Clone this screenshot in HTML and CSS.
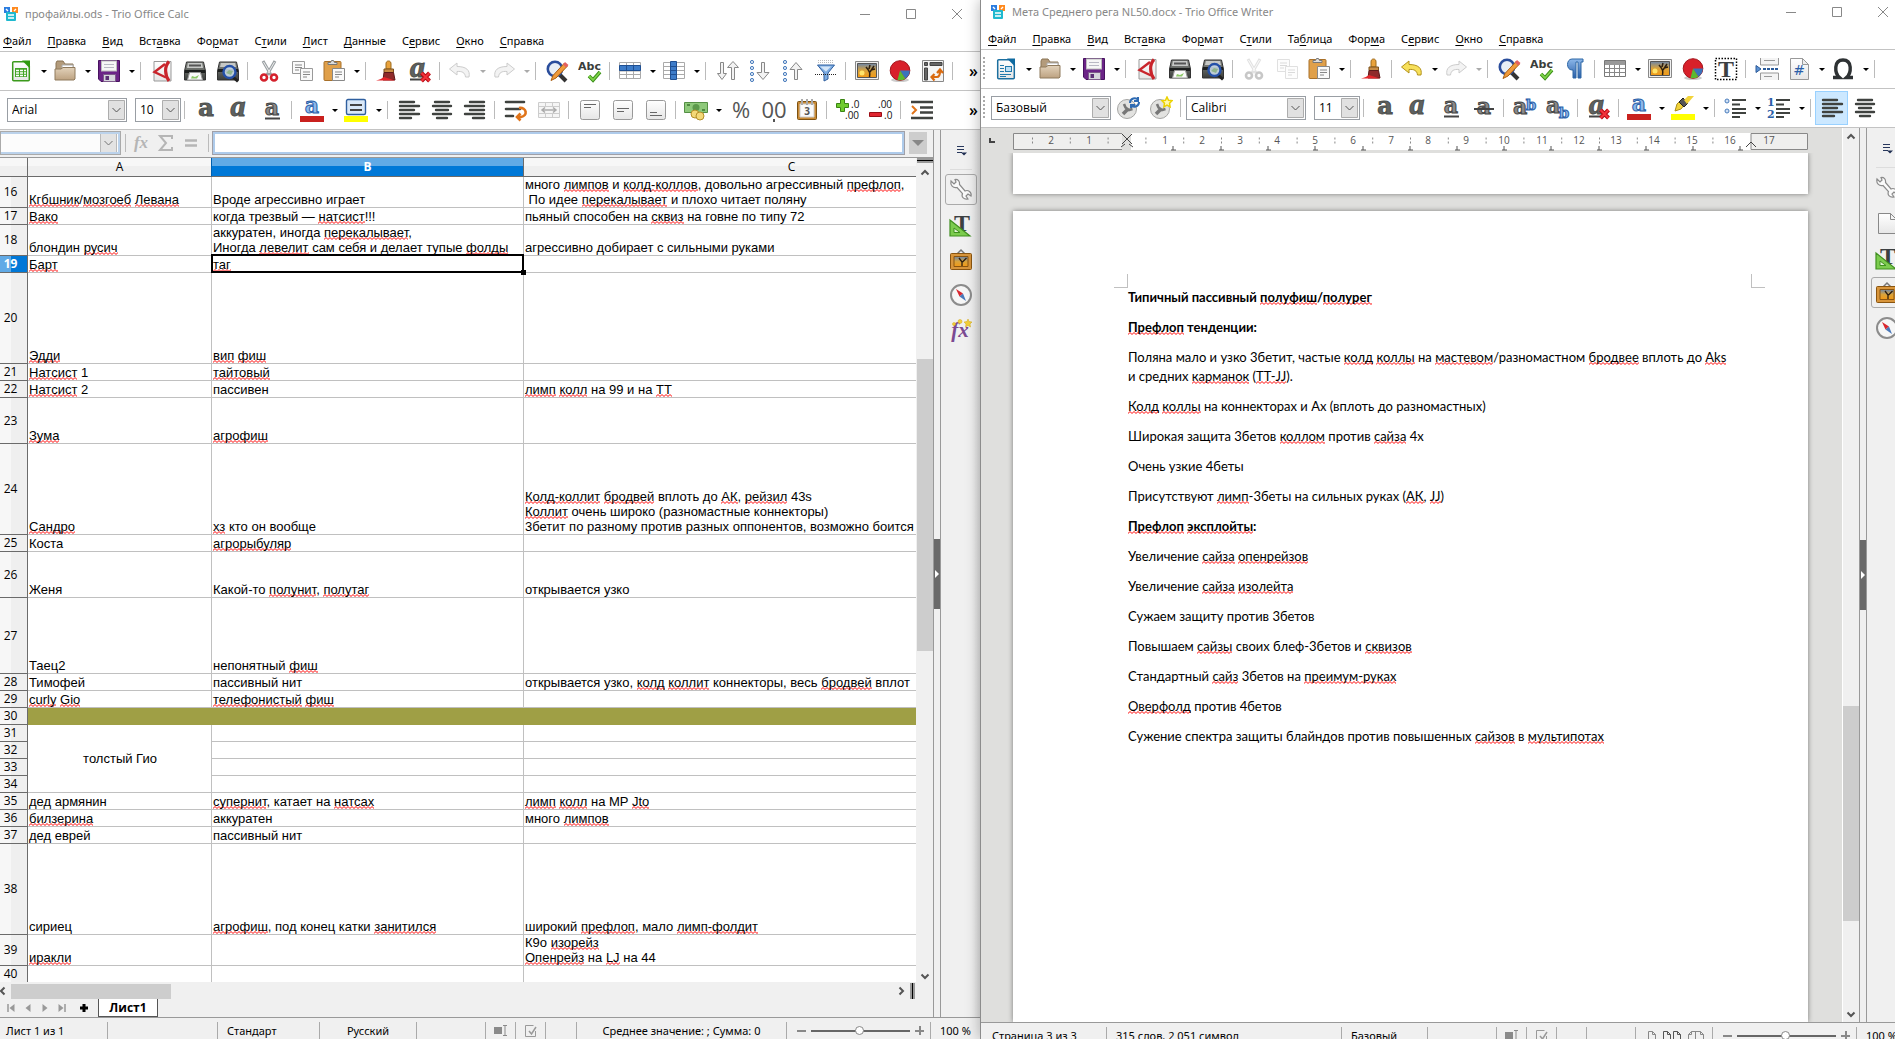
FILE: index.html
```html
<!DOCTYPE html>
<html lang="ru">
<head>
<meta charset="utf-8">
<title>Trio Office</title>
<link rel="stylesheet" href="styles.css">
</head>
<body>
<svg class="paints" aria-hidden="true">
  <defs>
    <linearGradient id="g-dark" x2="0" y2="1"><stop offset="0" stop-color="#8a8d88"/><stop offset="1" stop-color="#3a3d3b"/></linearGradient>
    <linearGradient id="g-blue" x2="0" y2="1"><stop offset="0" stop-color="#8db8ea"/><stop offset="1" stop-color="#2a5ea8"/></linearGradient>
    <linearGradient id="g-sun" x2="0" y2="1"><stop offset="0" stop-color="#6d86a8"/><stop offset=".5" stop-color="#d9a33c"/><stop offset="1" stop-color="#f39a15"/></linearGradient>
    <linearGradient id="g-tan" x2="0" y2="1"><stop offset="0" stop-color="#e2d2ba"/><stop offset="1" stop-color="#bda281"/></linearGradient>
    <linearGradient id="g-paper" x2="0" y2="1"><stop offset="0" stop-color="#fff"/><stop offset="1" stop-color="#e6e6e6"/></linearGradient>
  </defs>
</svg>
<svg class="symbols" aria-hidden="true">
  <symbol id="i-logo" viewBox="0 0 16 16"><path d="M1 1h6v6H1z" fill="#2b7de0"/><path d="M9 1h6v6H9z" fill="#ff8a1f"/><path d="M3 3l2 2M11 5l2-2" stroke="#fff" stroke-width="1.4"/><rect x="3" y="6" width="10" height="9" rx="1" fill="#1fb9cf"/><path d="M5 9h6M5 12h6" stroke="#fff" stroke-width="1.4"/></symbol>
  <symbol id="i-min" viewBox="0 0 12 12"><path d="M1 6.500h10" stroke="#888" fill="none"/></symbol>
  <symbol id="i-max" viewBox="0 0 12 12"><path d="M1.500 1.500h9v9h-9z" stroke="#888" fill="none"/></symbol>
  <symbol id="i-close" viewBox="0 0 12 12"><path d="M1 1l10 10M11 1L1 11" stroke="#888" fill="none"/></symbol>
  <symbol id="i-calc" viewBox="0 0 24 24"><path d="M4 2h12l4 5v14H4z" fill="url(#g-paper)"/><path d="M16 2.700H4.700a1 1 0 0 0-1 1v17a1 1 0 0 0 1 1h14.600a1 1 0 0 0 1-1V7" fill="none" stroke="#3b9a1c" stroke-width="1.500"/><path d="M13 1.500h8v8z" fill="#2f9a10"/><rect x="6" y="9" width="12" height="9" fill="#44a527"/><path d="M7 11.500h3M11 11.500h3M15 11.500h2M7 14h3M11 14h3M15 14h2M7 16.500h3M11 16.500h3M15 16.500h2" stroke="#fff" stroke-width="1.300"/></symbol>
  <symbol id="i-writer" viewBox="0 0 24 24"><path d="M4 2h12l4 5v14H4z" fill="url(#g-paper)"/><path d="M16 2.700H4.700a1 1 0 0 0-1 1v17a1 1 0 0 0 1 1h14.600a1 1 0 0 0 1-1V7" fill="none" stroke="#1c6f9f" stroke-width="1.500"/><path d="M13 1.500h8v8z" fill="#0f6aa0"/><path d="M6 8.500h4M6 11.500h4M6 14.500h4M6 17.500h11M6 19.500h6" stroke="#2179ab" stroke-width="1.200"/><rect x="11.500" y="9.500" width="6" height="5" fill="#bfe0f5" stroke="#2179ab"/></symbol>
  <symbol id="i-open" viewBox="0 0 24 24"><path d="M3 20V4l1-2h6l2 3h8v15z" fill="#b39b7b" stroke="#8a7455"/><path d="M9 6h11v8H9z" fill="#fff" stroke="#aaa"/><path d="M2 21V10h6l2-1.500h12V20l-1 1z" fill="url(#g-tan)" stroke="#8f7a5c"/></symbol>
  <symbol id="i-save" viewBox="0 0 24 24"><path d="M1.500 1.500h21v21H4l-2.500-2.500z" fill="#6b2487" stroke="#47125f"/><rect x="4.500" y="2" width="15" height="10" fill="#f6f6f6" stroke="#bbb"/><path d="M7 5.500h10M7 8.500h10" stroke="#b9b9c4"/><path d="M6.500 15.500h12v7h-12z" fill="#d6d6dc" stroke="#7d5a8b"/><path d="M8.500 17h3.500v4H8.500z" fill="#5b3075"/></symbol>
  <symbol id="i-pdf" viewBox="0 0 24 24"><path d="M4 2.500h17v19.500H4z" fill="url(#g-paper)" stroke="#999"/><path d="M19 2.500c-5 5-4 14 0 19.500" fill="none" stroke="#c9252c" stroke-width="3.200"/><path d="M15 5L4.500 13 16 18.500" fill="none" stroke="#c9252c" stroke-width="2.400"/></symbol>
  <symbol id="i-print" viewBox="0 0 24 24"><path d="M3.500 3h17l2 9v9h-21v-9z" fill="url(#g-dark)" stroke="#333"/><path d="M5 4h14l1 5H4z" fill="#c6c8c6"/><path d="M6 6.500h12" stroke="#555" stroke-width="2"/><path d="M2 11h20v3H2z" fill="#1d1f1e"/><path d="M6.500 13.500h11l2 7.500h-15z" fill="#fbfbfb" stroke="#999"/><path d="M9 17l3 1 4-2-2 3.500H8z" fill="#8cc868"/></symbol>
  <symbol id="i-preview" viewBox="0 0 24 24"><path d="M3.500 3h17l2 9v9h-21v-9z" fill="url(#g-dark)" stroke="#333"/><path d="M5 4h14l1 4H4z" fill="#c6c8c6"/><path d="M2 10h20v3H2z" fill="#1d1f1e"/><path d="M17 18l5 4.500" stroke="#222" stroke-width="3"/><circle cx="13.500" cy="13" r="6" fill="#cfe0ee" fill-opacity=".85" stroke="#2450a8" stroke-width="2.400"/><path d="M10 14l3-3 4 1-2 4z" fill="#8fb58c"/></symbol>
  <symbol id="i-cut" viewBox="0 0 24 24"><path d="M6 2l8 14M18 2l-8 14" stroke="#9aa0a3" stroke-width="3"/><path d="M6.500 3l6.500 11M17.500 3L11 14" stroke="#eee" stroke-width="1"/><circle cx="7" cy="18.500" r="3" fill="none" stroke="#d4212c" stroke-width="2.600"/><circle cx="17" cy="18.500" r="3" fill="none" stroke="#d4212c" stroke-width="2.600"/></symbol>
  <symbol id="i-copy" viewBox="0 0 24 24"><g fill="#fafafa" stroke="#9a9a9a"><path d="M2.500 2.500h12v12h-12z"/><path d="M10.500 9.500h12v12h-12z"/></g><path d="M5 6h7M5 8.500h7M5 11h4M13 13h7M13 15.500h7M13 18h4" stroke="#888"/></symbol>
  <symbol id="i-paste" viewBox="0 0 24 24"><rect x="2" y="2.500" width="17" height="19" rx="1" fill="#e0a04a" stroke="#a8702a"/><path d="M6 5.500V3.500h2.500l1-2h2l1 2H15v2z" fill="#ddd" stroke="#777"/><path d="M10.500 9.500h12v12h-12z" fill="#fafafa" stroke="#888"/><path d="M13 13h7M13 15.500h7M13 18h4" stroke="#888"/></symbol>
  <symbol id="i-brush" viewBox="0 0 24 24"><path d="M13.500 2c2 0 2.500 1.500 2.500 3v5h-5V5c0-1.500.5-3 2.500-3z" fill="#e9a23b" stroke="#9c6a1c"/><path d="M9 10h9.500v3.500H9z" fill="#c98d45" stroke="#7d521d"/><path d="M9 13.500h9.500l1.500 7.500H8z" fill="#8f2a2a" stroke="#5d1a1a"/><path d="M1 21.500c4-1 6-2 8-3.500l11 3.500z" fill="#e5262b"/></symbol>
  <symbol id="i-clear" viewBox="0 0 24 24"><text x="2" y="18" class="ic-ital">a</text><path d="M2 20.500h11" stroke="#444" stroke-width="2"/><path d="M13.500 14l8 8M21.500 14l-8 8" stroke="#b3060f" stroke-width="4"/><path d="M13.500 14l8 8M21.500 14l-8 8" stroke="#f2323b" stroke-width="2.200"/></symbol>
  <symbol id="i-undo" viewBox="0 0 24 24"><path d="M9 4L1.500 10 9 16v-3.500c5-.5 8 1 8.500 5.500h3.500c1.500-7-3-10.500-12-10.500z" fill="#f7e05a" stroke="#b3921b"/></symbol>
  <symbol id="i-undo-off" viewBox="0 0 24 24"><path d="M9 4L1.500 10 9 16v-3.500c5-.5 8 1 8.500 5.500h3.500c1.500-7-3-10.500-12-10.500z" fill="#f3f3f3" stroke="#ccc"/></symbol>
  <symbol id="i-redo-off" viewBox="0 0 24 24"><path d="M15 4l7.500 6-7.500 6v-3.500c-5-.5-8 1-8.500 5.500H3c-1.500-7 3-10.500 12-10.500z" fill="#f3f3f3" stroke="#ccc"/></symbol>
  <symbol id="i-find" viewBox="0 0 24 24"><path d="M15 16l6 6" stroke="#333" stroke-width="4"/><circle cx="10" cy="10" r="7.200" fill="#e8eef6" stroke="#2a4d9c" stroke-width="2.600"/><path d="M6 21.500l2-5L19.500 4l3 3L11 19z" fill="#f09a3a" stroke="#a85e12"/><path d="M18 5.500l2-2.500 3.500 3-2.500 2.500z" fill="#e46060"/></symbol>
  <symbol id="i-spell" viewBox="0 0 24 24"><text x="0" y="10.500" class="ic-abc">Abc</text><path d="M11 17l4 4 7-8" fill="none" stroke="#3a8f17" stroke-width="3.600"/><path d="M11 17l4 4 7-8" fill="none" stroke="#7fd34a" stroke-width="1.800"/></symbol>
  <symbol id="i-row" viewBox="0 0 24 24"><path d="M1.500 3.500h21v16h-21zM1.500 15.500h21M1.500 12h21M8.500 3v17M15.500 3v17" fill="#fff" stroke="#aaa"/><path d="M1.500 6.500h21v5h-21z" fill="#3d7cc9" stroke="#1f4f92"/><path d="M8.500 7v4M15.500 7v4" stroke="#1f4f92"/></symbol>
  <symbol id="i-col" viewBox="0 0 24 24"><path d="M1.500 3.500h21v16h-21zM1.500 7.500h21M1.500 11.500h21M1.500 15.500h21" fill="#fff" stroke="#aaa"/><path d="M8.500 2.500h6v18h-6z" fill="#3d7cc9" stroke="#1f4f92"/><path d="M9 7.500h5M9 11.500h5M9 15.500h5" stroke="#1f4f92"/></symbol>
  <symbol id="i-sort" viewBox="0 0 24 24"><path d="M5.500 3.500h3v11h3l-4.500 6-4.500-6h3z" fill="#f2f2f2" stroke="#888"/><path d="M16.500 20.500h3v-12h4L18 2.500l-5.500 6h4z" fill="#f2f2f2" stroke="#888"/></symbol>
  <symbol id="i-asc" viewBox="0 0 24 24"><g fill="#dfeaf7" stroke="#4a7dbd"><circle cx="4" cy="3" r="1.600"/><circle cx="4" cy="9" r="1.600"/><circle cx="4" cy="15" r="1.600"/><circle cx="4" cy="21" r="1.600"/></g><path d="M13.500 3.500h3v10h4.500l-6 7-6-7h4.500z" fill="#f2f2f2" stroke="#888"/></symbol>
  <symbol id="i-desc" viewBox="0 0 24 24"><g fill="#dfeaf7" stroke="#4a7dbd"><circle cx="4" cy="3" r="1.600"/><circle cx="4" cy="9" r="1.600"/><circle cx="4" cy="15" r="1.600"/><circle cx="4" cy="21" r="1.600"/></g><path d="M13.500 20.500h3v-10h4.500l-6-7-6 7h4.500z" fill="#f2f2f2" stroke="#888"/></symbol>
  <symbol id="i-filter" viewBox="0 0 24 24"><path d="M4 1.500h16M4 3.500h16" stroke="#bbb" stroke-dasharray="1 1"/><path d="M3.500 6h17l-6.500 8v6l-4 2v-8z" fill="#7faee3" stroke="#2f5f9f"/><path d="M6 7.500h11l-5 5z" fill="#d5e6f8"/><path d="M1 15.500h22" stroke="#222" stroke-dasharray="1 1"/></symbol>
  <symbol id="i-image" viewBox="0 0 24 24"><path d="M.5 2.500h23v18H.5z" fill="#f0f0f0" stroke="#888"/><path d="M2.500 4.500h19v14h-19z" fill="url(#g-sun)" stroke="#555"/><circle cx="7" cy="14" r="2.500" fill="#ffe46a"/><path d="M14.500 18c1-4 0-6-3.500-10M15 13l4-6M14 10l1-4M16 11l4-1" fill="none" stroke="#2d1f10" stroke-width="1.500"/></symbol>
  <symbol id="i-chart" viewBox="0 0 24 24"><ellipse cx="12" cy="21" rx="9" ry="2" fill="#ccc"/><circle cx="12" cy="11.500" r="9.800" fill="#d8202a" stroke="#a31219"/><path d="M12 11.500h9.800a9.800 9.800 0 0 1-4.500 8.200z" fill="#3a73bb"/><path d="M12 11.500l5.300 8.200a9.800 9.800 0 0 1-7.800 1.300z" fill="#5cb92f"/></symbol>
  <symbol id="i-pivot" viewBox="0 0 24 24"><path d="M1.500 1.500h21v21h-21z" fill="#f5f5f5" stroke="#888"/><path d="M3.500 3.500h3v3h-3zM9 3.500h12v3H9zM3.500 9h3v12h-3z" fill="#666" stroke="#444"/><path d="M11 18h5c2.500 0 3-2 3-6M13.500 15l-3 3 3 3.500M16 14l3-3.500 3 3.500" fill="none" stroke="#d96a10" stroke-width="2.200"/></symbol>
  <symbol id="i-bold" viewBox="0 0 24 24"><text x="12" y="18" class="ic-bold">a</text></symbol>
  <symbol id="i-italic" viewBox="0 0 24 24"><text x="11" y="18" class="ic-ital mid">a</text></symbol>
  <symbol id="i-under" viewBox="0 0 24 24"><text x="12" y="17" class="ic-thin">a</text><path d="M5 20.500h15" stroke="#444" stroke-width="2"/></symbol>
  <symbol id="i-strike" viewBox="0 0 24 24"><text x="12" y="18" class="ic-thin">a</text><path d="M2 13h20" stroke="#444" stroke-width="2"/></symbol>
  <symbol id="i-sup" viewBox="0 0 24 24"><text x="7" y="18" class="ic-thin">a</text><text x="18" y="14" class="ic-small">b</text></symbol>
  <symbol id="i-sub" viewBox="0 0 24 24"><text x="7" y="17" class="ic-thin">a</text><text x="18" y="22" class="ic-small">b</text></symbol>
  <symbol id="i-fcolor" viewBox="0 0 24 24"><text x="12" y="15" class="ic-blue">a</text><path d="M0 18h24v6H0z" fill="#c9211e"/></symbol>
  <symbol id="i-bgcolor" viewBox="0 0 24 24"><rect x="2.500" y="1.500" width="19" height="15" rx="1.500" fill="#d9e8f8" stroke="#2f5f9f" stroke-width="1.400"/><path d="M6 7h12M6 12h12" stroke="#444" stroke-width="2.200"/><path d="M0 18h24v6H0z" fill="#ff0"/></symbol>
  <symbol id="i-marker" viewBox="0 0 24 24"><path d="M4 15l2-7 4-4 4 4-4 5z" fill="#f2d33a" stroke="#a88d18"/><path d="M8 6l4-4 5 5-4 4z" fill="#555" stroke="#222"/><path d="M13 4l4-4h6l-7 8z" fill="#f2d33a"/><path d="M0 18h24v6H0z" fill="#ff0"/></symbol>
  <symbol id="i-left" viewBox="0 0 24 24"><path d="M3 4h14M3 8h19M3 12h14M3 16h19M3 20h11" stroke="#3f423f" stroke-width="2.400" stroke-linecap="round"/></symbol>
  <symbol id="i-center" viewBox="0 0 24 24"><path d="M5 4h14M3 8h18M6 12h12M3 16h18M7 20h10" stroke="#3f423f" stroke-width="2.400" stroke-linecap="round"/></symbol>
  <symbol id="i-right" viewBox="0 0 24 24"><path d="M7 4h14M2 8h19M7 12h14M2 16h19M10 20h11" stroke="#3f423f" stroke-width="2.400" stroke-linecap="round"/></symbol>
  <symbol id="i-wrap" viewBox="0 0 24 24"><path d="M2 4h18M2 11h14M2 18h7" stroke="#3f423f" stroke-width="2.600" stroke-linecap="round"/><path d="M15 10c8-1 9 8 2 9h-3M16.500 15.500L13 19l3.500 3.500" fill="none" stroke="#e0741a" stroke-width="2.600"/></symbol>
  <symbol id="i-merge" viewBox="0 0 24 24"><path d="M1.500 4.500h21v15h-21zM1.500 8.500h21M1.500 15.500h21M8.500 4v4M15.500 4v4M8.500 16v4M15.500 16v4" fill="#f5f5f5" stroke="#ccc"/><path d="M5 12h14M8 9.500L5 12l3 2.500M16 9.500l3 2.500-3 2.500" fill="none" stroke="#aaa" stroke-width="1.500"/></symbol>
  <symbol id="i-vtop" viewBox="0 0 24 24"><rect x="2.500" y="2.500" width="19" height="19" rx="2" fill="url(#g-paper)" stroke="#999"/><path d="M6 6.500h12M6 9.500h7" stroke="#666"/></symbol>
  <symbol id="i-vmid" viewBox="0 0 24 24"><rect x="2.500" y="2.500" width="19" height="19" rx="2" fill="url(#g-paper)" stroke="#999"/><path d="M6 10.500h12M6 13.500h7" stroke="#666"/></symbol>
  <symbol id="i-vbot" viewBox="0 0 24 24"><rect x="2.500" y="2.500" width="19" height="19" rx="2" fill="url(#g-paper)" stroke="#999"/><path d="M6 14.500h7M6 17.500h12" stroke="#666"/></symbol>
  <symbol id="i-money" viewBox="0 0 24 24"><path d="M.5 4.500h23v10H.5z" fill="#8ec97a" stroke="#558f45"/><circle cx="12" cy="9.500" r="3.500" fill="#5d9a4c"/><path d="M3 7h3M18 12h3" stroke="#4f8a40" stroke-width="2"/><circle cx="11" cy="16" r="4" fill="#f3d877" stroke="#b38f28"/><circle cx="16" cy="18" r="4" fill="#f3d877" stroke="#b38f28"/></symbol>
  <symbol id="i-percent" viewBox="0 0 24 24"><text x="12" y="20" class="ic-num">%</text></symbol>
  <symbol id="i-number" viewBox="0 0 24 24"><text x="12" y="20" class="ic-num">00</text><path d="M11 21h2v3h-2z" fill="#555"/></symbol>
  <symbol id="i-date" viewBox="0 0 24 24"><rect x="2.500" y="3.500" width="19" height="18" rx="1" fill="#c98a35" stroke="#7d5212"/><path d="M5 6h14v13H5z" fill="#fafafa" stroke="#ccc"/><path d="M7 1v6M12 1v6M17 1v6" stroke="#aaa" stroke-width="2"/><text x="12" y="17" class="ic-day">3</text></symbol>
  <symbol id="i-adddec" viewBox="0 0 24 24"><path d="M4.500 1.500h4v4h4v4h-4v4h-4v-4h-4v-4h4z" fill="#6fcb2d" stroke="#3a8413"/><text x="15" y="10" class="ic-dec">.0</text><text x="9" y="21" class="ic-dec">.00</text></symbol>
  <symbol id="i-deldec" viewBox="0 0 24 24"><path d="M.5 14.500h12v4H.5z" fill="#e02530" stroke="#9a0d15"/><text x="9" y="10" class="ic-dec">.00</text><text x="15" y="21" class="ic-dec">.0</text></symbol>
  <symbol id="i-indent" viewBox="0 0 24 24"><path d="M1 4h22M10 9.500h13M10 14.500h13M1 20h22" stroke="#3f423f" stroke-width="2.600"/><path d="M2 8l4 4-4 4" fill="none" stroke="#e0741a" stroke-width="2"/></symbol>
  <symbol id="i-pilcrow" viewBox="0 0 24 24"><path d="M20 2H9C3 2 3 13 9 13h1v8h3V5h2v16h3V5h2z" fill="url(#g-blue)" stroke="#2d67a5"/></symbol>
  <symbol id="i-table" viewBox="0 0 24 24"><path d="M1.500 3.500h21v16h-21z" fill="#fff" stroke="#777"/><path d="M2 4h20v4H2z" fill="#999"/><path d="M1.500 11.500h21M1.500 15.500h21M6.500 8v12M11.500 8v12M16.500 8v12" stroke="#888"/></symbol>
  <symbol id="i-textbox" viewBox="0 0 24 24"><path d="M1.500 1.500h21v21h-21z" fill="none" stroke="#000" stroke-width="1.500" stroke-dasharray="1.500 1.500"/><text x="12" y="20" class="ic-tee">T</text></symbol>
  <symbol id="i-break" viewBox="0 0 24 24"><path d="M5.500 1v7h18V1M5.500 23v-7h18v7" fill="#f4f4f4" stroke="#999"/><path d="M9 3.500h11M9 19.500h8" stroke="#999"/><path d="M1 8.500l5 3.500-5 3.500z" fill="#5b91d3" stroke="#2c5b99"/><path d="M8 12h16" stroke="#2c5b99" stroke-width="2" stroke-dasharray="3 1"/></symbol>
  <symbol id="i-field" viewBox="0 0 24 24"><path d="M3.500 1.500h12l6 6v15h-18z" fill="url(#g-paper)" stroke="#999"/><path d="M15.500 1.500v6h6z" fill="#eee" stroke="#999"/><text x="12" y="18" class="ic-hash">#</text></symbol>
  <symbol id="i-omega" viewBox="0 0 24 24"><path d="M2 20.500h6.500C3.500 16 2.500 3 12 3s8.500 13 3.500 17.500H22" fill="none" stroke="#2e3234" stroke-width="3.400"/></symbol>
  <symbol id="i-bullets" viewBox="0 0 24 24"><g fill="#cfe0f5" stroke="#4a7dbd"><circle cx="4" cy="5" r="2"/><circle cx="4" cy="15" r="2"/></g><path d="M9 4h14M9 8.500h8M9 13h14M9 17h14M9 21h8" stroke="#3f423f" stroke-width="2.200"/></symbol>
  <symbol id="i-numbers" viewBox="0 0 24 24"><text x="0" y="10" class="ic-list">1</text><text x="0" y="22" class="ic-list">2</text><path d="M9 4h14M9 8.500h8M9 13h14M9 17h14M9 21h8" stroke="#3f423f" stroke-width="2.200"/></symbol>
  <symbol id="i-styleupd" viewBox="0 0 24 24"><circle cx="11" cy="13" r="9.500" fill="#e2e2e0" stroke="#a5a5a3"/><path d="M7 18l5-5" fill="none" stroke="#777" stroke-width="3.600"/><path d="M8 8l1.500 3.500L13 14l3.500-1" fill="none" stroke="#777" stroke-width="2.600"/><path d="M14 7c0-5 6-6 8-3M23 6c0 5-6 6-8 3M22 1v4h-4M15 12V9h4" fill="none" stroke="#2f6bb3" stroke-width="2"/></symbol>
  <symbol id="i-stylenew" viewBox="0 0 24 24"><circle cx="11" cy="13" r="9.500" fill="#e2e2e0" stroke="#a5a5a3"/><path d="M7 18l5-5" fill="none" stroke="#777" stroke-width="3.600"/><path d="M8 8l1.500 3.500L13 14l3.500-1" fill="none" stroke="#777" stroke-width="2.600"/><path d="M18 1l1.500 3.200 3.500.5-2.500 2.500.6 3.600-3.100-1.700-3.100 1.700.6-3.600L13 4.700l3.500-.5z" fill="#fff9b0" stroke="#ecd200" stroke-width="1.500"/></symbol>
  <symbol id="i-fx" viewBox="0 0 24 24"><text x="12" y="17" class="ic-fx">fx</text></symbol>
  <symbol id="i-sum" viewBox="0 0 24 24"><path d="M18 8V5H6l6 7-6 7h12v-3" fill="none" stroke="#b5b5b5" stroke-width="2"/></symbol>
  <symbol id="i-eq" viewBox="0 0 24 24"><path d="M6 9.500h12M6 14.500h12" stroke="#b5b5b5" stroke-width="2.600"/></symbol>
  <symbol id="i-menu" viewBox="0 0 24 24"><path d="M8 8.500h7M8 11.500h7M8 14.500h5" stroke="#27375c" stroke-width="1.200"/><path d="M12 14.500h6l-3 3z" fill="#1d2c50"/></symbol>
  <symbol id="i-wrench" viewBox="0 0 24 24"><path d="M2 3l3 3 2-2-1-2.500c3-.5 5 2 4.500 5l5.500 6.500c3-1.500 7 1 6 5l-3-2-2 2 2 3c-4 1-7-2-5.500-5.500L8 9.500C4 10.500 1 7 2 3z" fill="#fafafa" stroke="#8b8b8b" stroke-width="1.200"/></symbol>
  <symbol id="i-page" viewBox="0 0 24 24"><path d="M3.500 2.500h12l6 6v14h-18z" fill="url(#g-paper)" stroke="#888"/><path d="M15.500 2.500v6h6z" fill="#f4f4f4" stroke="#888"/></symbol>
  <symbol id="i-styles" viewBox="0 0 24 24"><text x="13" y="18" class="ic-tee">T</text><path d="M1 7v16h20z" fill="#7ccc4e" stroke="#3f8f1f" stroke-width="1.200"/><path d="M5 15v4.500h6z" fill="#dff3d3" stroke="#3f8f1f"/></symbol>
  <symbol id="i-gallery" viewBox="0 0 24 24"><path d="M8 6l4-4 4 4" fill="none" stroke="#777" stroke-width="1.500"/><rect x="1.500" y="5.500" width="21" height="16" rx="1" fill="#d8953b" stroke="#8a5510"/><path d="M5 8.500h14v10H5z" fill="url(#g-sun)" stroke="#8a5510"/><path d="M13 18v-4l-3-4M13.500 14l4-4" fill="none" stroke="#2d1f10" stroke-width="1.300"/></symbol>
  <symbol id="i-compass" viewBox="0 0 24 24"><circle cx="12" cy="12" r="10" fill="#f6f6f6" stroke="#8c8c8c" stroke-width="2"/><path d="M7 6l7 4.500-3.500 3z" fill="#d9262e"/><path d="M17 18l-3-7.500-3.500 3z" fill="#4a78b8"/></symbol>
  <symbol id="i-func" viewBox="0 0 24 24"><text x="11" y="19" class="ic-func">fx</text><g fill="#f4d13a" stroke="#d0a614" stroke-width=".5"><path d="M19 1l1 2.500 3 .5-2 2 .5 3-2.500-1.500L16.500 9l.5-3-2-2 3-.5z"/><circle cx="11" cy="3.500" r="2"/><circle cx="5" cy="6" r="1.500"/></g></symbol>
  <symbol id="i-selmode" viewBox="0 0 16 16"><path d="M1 4h8v7H1z" fill="#8a8a8a"/><path d="M10 2.500h4M10 12.500h4M12 2.500v10" stroke="#8a8a8a"/></symbol>
  <symbol id="i-sign" viewBox="0 0 16 16"><path d="M10.500 2.500h-8v11h10V8" fill="none" stroke="#999"/><path d="M6 8l2.500 3L13 4" fill="none" stroke="#999" stroke-width="1.500"/></symbol>
  <symbol id="i-pg1" viewBox="0 0 10 14"><path d="M1.500 2.500h4l3 3v7h-7zM5.500 2.500v3h3" fill="none" stroke="#888"/></symbol>
  <symbol id="i-pg2" viewBox="0 0 20 14"><path d="M1.500 2.500h4l3 3v7h-7zM5.500 2.500v3h3M11.500 2.500h4l3 3v7h-7zM15.500 2.500v3h3" fill="none" stroke="#555"/></symbol>
  <symbol id="i-pg3" viewBox="0 0 18 14"><path d="M1.500 5.500l3-3h9l3 3v7h-15zM8.500 2.500v10M4.500 2.500v3h-3M13.500 2.500v3h3" fill="none" stroke="#888"/></symbol>
  <symbol id="i-up" viewBox="0 0 12 12"><path d="M2.500 7.500L6 4l3.500 3.500" fill="none" stroke="#555" stroke-width="2"/></symbol>
  <symbol id="i-down" viewBox="0 0 12 12"><path d="M2.500 4.500L6 8l3.500-3.500" fill="none" stroke="#555" stroke-width="2"/></symbol>
  <symbol id="i-prev" viewBox="0 0 12 12"><path d="M7.500 2.500L4 6l3.500 3.500" fill="none" stroke="#555" stroke-width="2"/></symbol>
  <symbol id="i-next" viewBox="0 0 12 12"><path d="M4.500 2.500L8 6 4.500 9.500" fill="none" stroke="#555" stroke-width="2"/></symbol>
  <symbol id="i-nfirst" viewBox="0 0 10 10"><path d="M2 1v8" stroke="#999" stroke-width="1.500"/><path d="M8.500 1v8L3.500 5z" fill="#999"/></symbol>
  <symbol id="i-nprev" viewBox="0 0 10 10"><path d="M7.500 1v8L2.500 5z" fill="#999"/></symbol>
  <symbol id="i-nnext" viewBox="0 0 10 10"><path d="M2.500 1v8L7.500 5z" fill="#999"/></symbol>
  <symbol id="i-nlast" viewBox="0 0 10 10"><path d="M8 1v8" stroke="#999" stroke-width="1.500"/><path d="M1.500 1v8L6.500 5z" fill="#999"/></symbol>
  <symbol id="i-plus" viewBox="0 0 10 10"><path d="M5 1v8M1 5h8" stroke="#000" stroke-width="3"/></symbol>
</svg>

<div class="desktop">
<section class="win calc" aria-label="Trio Office Calc">
  <header class="title"><svg class="logo"><use href="#i-logo"/></svg><span class="caption">профайлы.ods - Trio Office Calc</span>
    <button class="wb" aria-label="Свернуть"><svg><use href="#i-min"/></svg></button><button class="wb" aria-label="Развернуть"><svg><use href="#i-max"/></svg></button><button class="wb" aria-label="Закрыть"><svg><use href="#i-close"/></svg></button></header>
  <nav class="menu"><button><u>Ф</u>айл</button><button><u>П</u>равка</button><button><u>В</u>ид</button><button>Вст<u>а</u>вка</button><button>Фо<u>р</u>мат</button><button>С<u>т</u>или</button><button><u>Л</u>ист</button><button><u>Д</u>анные</button><button>С<u>е</u>рвис</button><button><u>О</u>кно</button><button><u>С</u>правка</button></nav>
  <div class="bar" role="toolbar" aria-label="Стандартная">
    <button class="tb dd" aria-label="Создать"><svg><use href="#i-calc"/></svg></button><button class="tb dd" aria-label="Открыть"><svg><use href="#i-open"/></svg></button><button class="tb dd" aria-label="Сохранить"><svg><use href="#i-save"/></svg></button><i class="sep"></i>
    <button class="tb" aria-label="PDF"><svg><use href="#i-pdf"/></svg></button><button class="tb" aria-label="Печать"><svg><use href="#i-print"/></svg></button><button class="tb" aria-label="Просмотр печати"><svg><use href="#i-preview"/></svg></button><i class="sep"></i>
    <button class="tb" aria-label="Вырезать"><svg><use href="#i-cut"/></svg></button><button class="tb" aria-label="Копировать"><svg><use href="#i-copy"/></svg></button><button class="tb dd" aria-label="Вставить"><svg><use href="#i-paste"/></svg></button><i class="sep"></i>
    <button class="tb" aria-label="Клонировать"><svg><use href="#i-brush"/></svg></button><button class="tb" aria-label="Очистить"><svg><use href="#i-clear"/></svg></button><i class="sep"></i>
    <button class="tb dd off" aria-label="Отменить"><svg><use href="#i-undo-off"/></svg></button><button class="tb dd off" aria-label="Вернуть"><svg><use href="#i-redo-off"/></svg></button><i class="sep"></i>
    <button class="tb" aria-label="Найти"><svg><use href="#i-find"/></svg></button><button class="tb" aria-label="Орфография"><svg><use href="#i-spell"/></svg></button><i class="sep"></i>
    <button class="tb dd" aria-label="Строка"><svg><use href="#i-row"/></svg></button><button class="tb dd" aria-label="Столбец"><svg><use href="#i-col"/></svg></button><i class="sep"></i>
    <button class="tb" aria-label="Сортировка"><svg><use href="#i-sort"/></svg></button><button class="tb" aria-label="По возрастанию"><svg><use href="#i-asc"/></svg></button><button class="tb" aria-label="По убыванию"><svg><use href="#i-desc"/></svg></button><button class="tb" aria-label="Автофильтр"><svg><use href="#i-filter"/></svg></button><i class="sep"></i>
    <button class="tb" aria-label="Изображение"><svg><use href="#i-image"/></svg></button><button class="tb" aria-label="Диаграмма"><svg><use href="#i-chart"/></svg></button><button class="tb" aria-label="Сводная таблица"><svg><use href="#i-pivot"/></svg></button><i class="sep"></i>
    <button class="more">»</button>
  </div>
  <div class="bar" role="toolbar" aria-label="Форматирование">
    <select class="combo wide" aria-label="Шрифт"><option>Arial</option></select><select class="combo size" aria-label="Кегль"><option>10</option></select><i class="sep"></i>
    <button class="tb" aria-label="Полужирный"><svg><use href="#i-bold"/></svg></button><button class="tb" aria-label="Курсив"><svg><use href="#i-italic"/></svg></button><button class="tb" aria-label="Подчёркнутый"><svg><use href="#i-under"/></svg></button><i class="sep"></i>
    <button class="tb dd" aria-label="Цвет шрифта"><svg><use href="#i-fcolor"/></svg></button><button class="tb dd" aria-label="Цвет фона"><svg><use href="#i-bgcolor"/></svg></button><i class="sep"></i>
    <button class="tb" aria-label="По левому краю"><svg><use href="#i-left"/></svg></button><button class="tb" aria-label="По центру"><svg><use href="#i-center"/></svg></button><button class="tb" aria-label="По правому краю"><svg><use href="#i-right"/></svg></button><i class="sep"></i>
    <button class="tb" aria-label="Перенос"><svg><use href="#i-wrap"/></svg></button><button class="tb" aria-label="Объединить"><svg><use href="#i-merge"/></svg></button><i class="sep"></i>
    <button class="tb" aria-label="Вверху"><svg><use href="#i-vtop"/></svg></button><button class="tb" aria-label="Посередине"><svg><use href="#i-vmid"/></svg></button><button class="tb" aria-label="Внизу"><svg><use href="#i-vbot"/></svg></button><i class="sep"></i>
    <button class="tb dd" aria-label="Денежный"><svg><use href="#i-money"/></svg></button><button class="tb" aria-label="Процент"><svg><use href="#i-percent"/></svg></button><button class="tb" aria-label="Число"><svg><use href="#i-number"/></svg></button><button class="tb" aria-label="Дата"><svg><use href="#i-date"/></svg></button><i class="sep"></i>
    <button class="tb" aria-label="Добавить разряд"><svg><use href="#i-adddec"/></svg></button><button class="tb" aria-label="Удалить разряд"><svg><use href="#i-deldec"/></svg></button><i class="sep"></i>
    <button class="tb" aria-label="Отступ"><svg><use href="#i-indent"/></svg></button>
    <button class="more">»</button>
  </div>
  <div class="body">
    <div class="work">
      <div class="formula">
        <select class="combo name" aria-label="Имя ячейки"><option></option></select><i class="sep"></i>
        <button class="fb" aria-label="Мастер функций"><svg><use href="#i-fx"/></svg></button><button class="fb" aria-label="Сумма"><svg><use href="#i-sum"/></svg></button><button class="fb" aria-label="Формула"><svg><use href="#i-eq"/></svg></button><i class="sep"></i>
        <input class="finput" type="text" aria-label="Строка формул"><button class="fdrop" aria-label="Развернуть строку формул"></button>
      </div>
      <div class="sheet">
        <div class="cells">
        <table>
          <colgroup><col class="c-num"><col class="c-a"><col class="c-b"><col></colgroup>
          <thead><tr><th></th><th>A</th><th class="sel">B</th><th>C</th></tr></thead>
          <tbody>
            <tr class="h31"><th>16</th><td><s>Кгбшник</s>/<s>мозгоеб</s> <s>Левана</s></td><td>Вроде агрессивно играет</td><td>много <s>лимпов</s> и <s>колд-коллов</s>, довольно агрессивный <s>префлоп</s>,<br>&nbsp;По идее <s>перекалывает</s> и плохо читает поляну</td></tr>
            <tr><th>17</th><td><s>Вако</s></td><td>когда трезвый — <s>натсист</s>!!!</td><td>пьяный способен на <s>сквиз</s> на говне по типу 72</td></tr>
            <tr class="h31"><th>18</th><td>блондин <s>русич</s></td><td>аккуратен, иногда <s>перекалывает</s>,<br>Иногда <s>левелит</s> сам себя и делает тупые <s>фолды</s></td><td>агрессивно добирает с сильными руками</td></tr>
            <tr><th class="sel">19</th><td><s>Барт</s></td><td class="cursor"><s>таг</s></td><td></td></tr>
            <tr class="h91"><th>20</th><td><s>Эдди</s></td><td><s>вип</s> <s>фиш</s></td><td></td></tr>
            <tr><th>21</th><td><s>Натсист</s> 1</td><td><s>тайтовый</s></td><td></td></tr>
            <tr><th>22</th><td><s>Натсист</s> 2</td><td>пассивен</td><td><s>лимп</s> <s>колл</s> на 99 и на <s>ТТ</s></td></tr>
            <tr class="h46"><th>23</th><td><s>Зума</s></td><td><s>агрофиш</s></td><td></td></tr>
            <tr class="h91"><th>24</th><td><s>Сандро</s></td><td><s>хз</s> кто он вообще</td><td><s>Колд-коллит</s> <s>бродвей</s> вплоть до <s>АК</s>, <s>рейзил</s> 43s<br><s>Коллит</s> очень широко (разномастные коннекторы)<br>3бетит по разному против разных оппонентов, возможно боится</td></tr>
            <tr><th>25</th><td>Коста</td><td><s>агрорыбуляр</s></td><td></td></tr>
            <tr class="h46"><th>26</th><td>Женя</td><td>Какой-то <s>полунит</s>, <s>полутаг</s></td><td>открывается узко</td></tr>
            <tr class="h76"><th>27</th><td>Таец2</td><td>непонятный <s>фиш</s></td><td></td></tr>
            <tr><th>28</th><td>Тимофей</td><td>пассивный нит</td><td>открывается узко, <s>колд</s> <s>коллит</s> коннекторы, весь <s>бродвей</s> вплот</td></tr>
            <tr><th>29</th><td><s>curly</s> <s>Gio</s></td><td><s>телефонистый</s> <s>фиш</s></td><td></td></tr>
            <tr class="olive"><th>30</th><td></td><td></td><td></td></tr>
            <tr><th>31</th><td rowspan="4" class="merged">толстый Гио</td><td></td><td></td></tr>
            <tr><th>32</th><td></td><td></td></tr>
            <tr><th>33</th><td></td><td></td></tr>
            <tr><th>34</th><td></td><td></td></tr>
            <tr><th>35</th><td>дед армянин</td><td><s>супернит</s>, катает на <s>натсах</s></td><td><s>лимп</s> <s>колл</s> на MP <s>Jto</s></td></tr>
            <tr><th>36</th><td><s>билзерина</s></td><td>аккуратен</td><td>много <s>лимпов</s></td></tr>
            <tr><th>37</th><td>дед еврей</td><td>пассивный нит</td><td></td></tr>
            <tr class="h91"><th>38</th><td>сириец</td><td><s>агрофиш</s>, под конец катки <s>занитился</s></td><td>широкий <s>префлоп</s>, мало <s>лимп-фолдит</s></td></tr>
            <tr class="h31"><th>39</th><td><s>иракли</s></td><td></td><td>К9о <s>изорейз</s><br><s>Опенрейз</s> на <s>LJ</s> на 44</td></tr>
            <tr><th>40</th><td></td><td></td><td></td></tr>
          </tbody>
        </table>
        </div>
        <div class="vscroll"><i class="split"></i><svg><use href="#i-up"/></svg><i class="gap-a"></i><i class="thumb-v"></i><i class="gap-b"></i><svg><use href="#i-down"/></svg></div>
      </div>
      <div class="hscroll"><svg><use href="#i-prev"/></svg><i class="thumb-h"></i><svg class="end"><use href="#i-next"/></svg><i class="split-h"></i></div>
      <div class="tabs"><button aria-label="Первый"><svg><use href="#i-nfirst"/></svg></button><button aria-label="Предыдущий"><svg><use href="#i-nprev"/></svg></button><button aria-label="Следующий"><svg><use href="#i-nnext"/></svg></button><button aria-label="Последний"><svg><use href="#i-nlast"/></svg></button><button class="add" aria-label="Добавить лист"><svg><use href="#i-plus"/></svg></button><button class="tab">Лист1</button></div>
    </div>
    <div class="splitter"><i></i></div>
    <aside class="side"><button class="top" aria-label="Настройки"><svg><use href="#i-menu"/></svg></button><button class="on" aria-label="Свойства"><svg><use href="#i-wrench"/></svg></button><button aria-label="Стили"><svg><use href="#i-styles"/></svg></button><button aria-label="Галерея"><svg><use href="#i-gallery"/></svg></button><button aria-label="Навигатор"><svg><use href="#i-compass"/></svg></button><button aria-label="Функции"><svg><use href="#i-func"/></svg></button></aside>
  </div>
  <footer class="status calc-status"><span>Лист 1 из 1</span><span></span><span>Стандарт</span><span class="c">Русский</span><span></span><span class="c"><svg><use href="#i-selmode"/></svg></span><span class="c"><svg><use href="#i-sign"/></svg></span><span></span><span class="c">Среднее значение: ; Сумма: 0</span><span class="zoom"><button class="minus" aria-label="Уменьшить"></button><input type="range" min="0" max="100" value="49" aria-label="Масштаб"><button class="minus plus" aria-label="Увеличить"></button></span><span>100 %</span></footer>
</section>

<section class="win writer" aria-label="Trio Office Writer">
  <div class="frame">
  <header class="title"><svg class="logo"><use href="#i-logo"/></svg><span class="caption">Мета Среднего рега NL50.docx - Trio Office Writer</span>
    <button class="wb" aria-label="Свернуть"><svg><use href="#i-min"/></svg></button><button class="wb" aria-label="Развернуть"><svg><use href="#i-max"/></svg></button><button class="wb" aria-label="Закрыть"><svg><use href="#i-close"/></svg></button></header>
  <nav class="menu"><button><u>Ф</u>айл</button><button><u>П</u>равка</button><button><u>В</u>ид</button><button>Вст<u>а</u>вка</button><button>Фо<u>р</u>мат</button><button>С<u>т</u>или</button><button>Та<u>б</u>лица</button><button>Фор<u>м</u>а</button><button>С<u>е</u>рвис</button><button><u>О</u>кно</button><button><u>С</u>правка</button></nav>
  <div class="bar" role="toolbar" aria-label="Стандартная">
    <i class="grip"></i>
    <button class="tb dd" aria-label="Создать"><svg><use href="#i-writer"/></svg></button><button class="tb dd" aria-label="Открыть"><svg><use href="#i-open"/></svg></button><button class="tb dd" aria-label="Сохранить"><svg><use href="#i-save"/></svg></button><i class="sep"></i>
    <button class="tb" aria-label="PDF"><svg><use href="#i-pdf"/></svg></button><button class="tb" aria-label="Печать"><svg><use href="#i-print"/></svg></button><button class="tb" aria-label="Просмотр печати"><svg><use href="#i-preview"/></svg></button><i class="sep"></i>
    <button class="tb faded" aria-label="Вырезать"><svg><use href="#i-cut"/></svg></button><button class="tb faded" aria-label="Копировать"><svg><use href="#i-copy"/></svg></button><button class="tb dd" aria-label="Вставить"><svg><use href="#i-paste"/></svg></button><i class="sep"></i>
    <button class="tb" aria-label="Клонировать"><svg><use href="#i-brush"/></svg></button><i class="sep"></i>
    <button class="tb dd" aria-label="Отменить"><svg><use href="#i-undo"/></svg></button><button class="tb dd off" aria-label="Вернуть"><svg><use href="#i-redo-off"/></svg></button><i class="sep"></i>
    <button class="tb" aria-label="Найти"><svg><use href="#i-find"/></svg></button><button class="tb" aria-label="Орфография"><svg><use href="#i-spell"/></svg></button><button class="tb" aria-label="Непечатаемые символы"><svg><use href="#i-pilcrow"/></svg></button><i class="sep"></i>
    <button class="tb dd" aria-label="Таблица"><svg><use href="#i-table"/></svg></button><button class="tb" aria-label="Изображение"><svg><use href="#i-image"/></svg></button><button class="tb" aria-label="Диаграмма"><svg><use href="#i-chart"/></svg></button><button class="tb" aria-label="Врезка"><svg><use href="#i-textbox"/></svg></button><i class="sep"></i>
    <button class="tb" aria-label="Разрыв страницы"><svg><use href="#i-break"/></svg></button><button class="tb dd" aria-label="Поле"><svg><use href="#i-field"/></svg></button><button class="tb dd" aria-label="Символ"><svg><use href="#i-omega"/></svg></button><i class="sep"></i>
  </div>
  <div class="bar" role="toolbar" aria-label="Форматирование">
    <i class="grip"></i>
    <select class="combo wide" aria-label="Стиль абзаца"><option>Базовый</option></select><button class="tb" aria-label="Обновить стиль"><svg><use href="#i-styleupd"/></svg></button><button class="tb" aria-label="Создать стиль"><svg><use href="#i-stylenew"/></svg></button><i class="sep"></i>
    <select class="combo wide" aria-label="Шрифт"><option>Calibri</option></select><select class="combo size" aria-label="Кегль"><option>11</option></select><i class="sep"></i>
    <button class="tb" aria-label="Полужирный"><svg><use href="#i-bold"/></svg></button><button class="tb" aria-label="Курсив"><svg><use href="#i-italic"/></svg></button><button class="tb" aria-label="Подчёркнутый"><svg><use href="#i-under"/></svg></button><button class="tb" aria-label="Зачёркнутый"><svg><use href="#i-strike"/></svg></button><i class="sep"></i>
    <button class="tb" aria-label="Верхний индекс"><svg><use href="#i-sup"/></svg></button><button class="tb" aria-label="Нижний индекс"><svg><use href="#i-sub"/></svg></button><i class="sep"></i>
    <button class="tb" aria-label="Очистить"><svg><use href="#i-clear"/></svg></button><i class="sep"></i>
    <button class="tb dd" aria-label="Цвет шрифта"><svg><use href="#i-fcolor"/></svg></button><button class="tb dd" aria-label="Цвет выделения"><svg><use href="#i-marker"/></svg></button><i class="sep"></i>
    <button class="tb dd" aria-label="Маркеры"><svg><use href="#i-bullets"/></svg></button><button class="tb dd" aria-label="Нумерация"><svg><use href="#i-numbers"/></svg></button><i class="sep"></i>
    <button class="tb pressed" aria-label="По левому краю"><svg><use href="#i-left"/></svg></button><button class="tb" aria-label="По центру"><svg><use href="#i-center"/></svg></button>
  </div>
  <div class="body">
    <div class="doc">
      <div class="ruler">
        <i class="tabkind"></i>
        <svg class="scale" height="26">
          <path d="M0 5h795v17H0z" fill="#fff"/>
          <path d="M.5 5.500h112v16H.5z" fill="#efefee" stroke="#888"/><path d="M738 5.500h56.500v16H738z" fill="#efefee" stroke="#888"/><path d="M109 5h9v17h-9z" fill="#dfdfdd"/>
          <path d="M109 6l10 10M119 6l-10 10M108 19l4-3M120 19l-4-3M733 19l5-5 5 5" fill="none" stroke="#444"/>
          <path d="M19 10.500h698" stroke="#888" stroke-width="2" stroke-dasharray="1 36.800"/><path d="M19 14.500h698" stroke="#888" stroke-width="2" stroke-dasharray="1 36.800"/>
          <path d="M160 22v-4M208 22v-4M255 22v-4M302 22v-4M350 22v-4M397 22v-4M444 22v-4M491 22v-4M538 22v-4M586 22v-4M633 22v-4M680 22v-4M727 22v-4M158 22h5M206 22h5M253 22h5M300 22h5M348 22h5M395 22h5M442 22h5M489 22h5M536 22h5M584 22h5M631 22h5M678 22h5M725 22h5" stroke="#555"/>
          <g class="nums"><text x="38" y="16">2</text><text x="76" y="16">1</text><text x="152" y="16">1</text><text x="189" y="16">2</text><text x="227" y="16">3</text><text x="264" y="16">4</text><text x="302" y="16">5</text><text x="340" y="16">6</text><text x="378" y="16">7</text><text x="415" y="16">8</text><text x="453" y="16">9</text><text x="491" y="16">10</text><text x="529" y="16">11</text><text x="566" y="16">12</text><text x="603" y="16">13</text><text x="641" y="16">14</text><text x="679" y="16">15</text><text x="717" y="16">16</text><text x="756" y="16">17</text></g>
        </svg>
      </div>
      <div class="canvas">
        <div class="page tail"></div>
        <article class="page">
          <div class="crops"><i></i><i class="r"></i></div>
          <div class="text">
            <p><b>Типичный пассивный <s>полуфиш</s>/<s>полурег</s></b></p>
            <p><b><s>Префлоп</s> тенденции:</b></p>
            <p>Поляна мало и узко 3бетит, частые <s>колд</s> <s>коллы</s> на <s>мастевом</s>/разномастном <s>бродвее</s> вплоть до <s>Aks</s><br>и средних <s>карманок</s> (<s>ТТ-JJ</s>).</p>
            <p><s>Колд</s> <s>коллы</s> на коннекторах и Ах (вплоть до разномастных)</p>
            <p>Широкая защита 3бетов <s>коллом</s> против <s>сайза</s> 4х</p>
            <p>Очень узкие 4беты</p>
            <p>Присутствуют <s>лимп</s>-3беты на сильных руках (<s>АК</s>, <s>JJ</s>)</p>
            <p><b><s>Префлоп</s> <s>эксплойты</s>:</b></p>
            <p>Увеличение <s>сайза</s> <s>опенрейзов</s></p>
            <p>Увеличение <s>сайза</s> <s>изолейта</s></p>
            <p>Сужаем защиту против 3бетов</p>
            <p>Повышаем <s>сайзы</s> своих блеф-3бетов и <s>сквизов</s></p>
            <p>Стандартный <s>сайз</s> 3бетов на <s>преимум-руках</s></p>
            <p><s>Оверфолд</s> против 4бетов</p>
            <p>Сужение спектра защиты блайндов против повышенных <s>сайзов</s> в <s>мультипотах</s></p>
          </div>
        </article>
      </div>
    </div>
    <div class="vscroll"><svg><use href="#i-up"/></svg><i class="gap-a"></i><i class="thumb-v"></i><i class="gap-b"></i><svg><use href="#i-down"/></svg></div>
    <div class="splitter"><i></i></div>
    <aside class="side"><button class="top" aria-label="Настройки"><svg><use href="#i-menu"/></svg></button><button aria-label="Свойства"><svg><use href="#i-wrench"/></svg></button><button aria-label="Страница"><svg><use href="#i-page"/></svg></button><button aria-label="Стили"><svg><use href="#i-styles"/></svg></button><button class="on" aria-label="Галерея"><svg><use href="#i-gallery"/></svg></button><button aria-label="Навигатор"><svg><use href="#i-compass"/></svg></button></aside>
  </div>
  <footer class="status writer-status"><span>Страница 3 из 3</span><span>315 слов, 2 051 символ</span><span>Базовый</span><span></span><span class="c"><svg><use href="#i-selmode"/></svg></span><span class="c"><svg><use href="#i-sign"/></svg></span><span></span><span></span><span class="pages"><svg class="p1"><use href="#i-pg1"/></svg><svg class="p2"><use href="#i-pg2"/></svg><svg class="p3"><use href="#i-pg3"/></svg></span><span class="zoom"><button class="minus" aria-label="Уменьшить"></button><input type="range" min="0" max="100" value="49" aria-label="Масштаб"><button class="minus plus" aria-label="Увеличить"></button></span><span>100 %</span></footer>
  </div>
</section>
</div>
</body>
</html>
```

FILE: styles.css
```css
* { box-sizing: border-box; }
body { margin: 0; height: 100vh; overflow: hidden; background: #fff; color: #000; font: 12px/16px "Open Sans", "Noto Sans", sans-serif; }
button { border: 0; padding: 0; margin: 0; background: none; font: inherit; color: inherit; }
svg { display: block; flex: none; }
.paints { position: absolute; width: 0; height: 0; }
.symbols { display: none; }
.desktop { display: grid; grid-template-columns: 980fr 915fr; height: 100vh; overflow: hidden; }
.win { min-width: 0; overflow: hidden; background: #fff; }
.calc { display: flex; flex-direction: column; height: calc(100vh + 4px); }
.writer { height: 100vh; border-left: 1px solid #8c8c8c; box-shadow: 0 0 14px rgba(0, 0, 0, .3); }
.frame { display: flex; flex-direction: column; width: calc(100% + 11px); height: calc(100vh + 9px); }

/* title and menu */
.title, .menu, .status { font-family: "Noto Sans", "Open Sans", sans-serif; font-size: 11px; }
.title { display: flex; align-items: center; flex: none; height: 29px; padding: 0 0 2px 3px; color: #888; }
.writer .title { height: 28px; padding: 0 0 4px 9px; }
.logo { width: 16px; height: 16px; }
.caption { flex: 1; padding-left: 6px; white-space: nowrap; overflow: hidden; }
.wb { display: flex; justify-content: center; align-items: center; width: 46px; height: 24px; }
.wb svg { width: 12px; height: 12px; }
.menu { display: flex; align-items: center; flex: none; height: 23px; gap: 16px; padding: 2px 0 0 3px; border-bottom: 1px solid #c3c3c3; }
.writer .menu { height: 22px; padding: 0 0 0 7px; }
.menu u { text-underline-offset: 2px; }

/* toolbars */
.bar { display: flex; align-items: center; flex: none; height: 39px; padding-left: 5px; border-bottom: 1px solid #c3c3c3; overflow: hidden; }
.writer .bar { padding-left: 2px; }
.writer .bar .grip { margin-right: 5px; }
.grip { flex: none; width: 2px; height: 24px; background: repeating-linear-gradient(#aaa 0 2px, transparent 2px 4px); }
.tb { display: flex; justify-content: center; align-items: center; flex: none; width: 33px; height: 34px; }
.tb svg { width: 24px; height: 24px; }
.dd { width: 44px; justify-content: flex-start; padding-left: 4px; }
.dd::after { content: ""; margin-left: 8px; border: 3px solid transparent; border-top-color: #000; border-bottom: 0; }
.off::after { border-top-color: #aaa; }
.faded svg { opacity: .3; filter: grayscale(1); }
.pressed { background: #cce8ff; border: 1px solid #99d1ff; }
.sep { flex: none; width: 8px; height: 18px; background: linear-gradient(#bbb, #bbb) 3px 0 / 1px 100% no-repeat; }
.more { margin-left: auto; padding-right: 2px; font-size: 16px; font-weight: 600; }
.combo { appearance: none; flex: none; height: 24px; padding: 0 0 0 4px; border: 1px solid #999ea4; border-radius: 0; font: inherit; line-height: 20px; color: #000; background: #fff url("data:image/svg+xml,%3Csvg xmlns='http://www.w3.org/2000/svg' width='18' height='20'%3E%3Cpath d='M.5.5h16v19H.5z' fill='%23e1e1e1' stroke='%23adadad'/%3E%3Cpath d='M4.500 8l4 4 4-4' fill='none' stroke='%23555'/%3E%3C/svg%3E") right 0 center no-repeat; }
.wide { width: 120px; margin-left: 2px; }
.wide + .size { margin-left: 8px; width: 46px; }
.writer .wide { margin-left: 1px; }

/* icon lettering */
.ic-bold, .ic-ital, .ic-thin, .ic-blue, .ic-small { font-family: "DejaVu Serif", serif; font-weight: 700; font-size: 24px; fill: #5f6260; }
.ic-bold, .ic-thin, .ic-blue, .ic-small, .mid, .ic-num, .ic-day, .ic-tee, .ic-hash, .ic-fx, .ic-func { text-anchor: middle; }
.ic-bold { stroke: #4d504e; stroke-width: 1px; }
.ic-ital { font-family: "Liberation Serif", serif; font-style: italic; font-size: 30px; stroke: #4d504e; stroke-width: 1px; }
.ic-thin { font-size: 22px; fill: #8a8a8a; stroke: #444; stroke-width: 1px; }
.ic-blue { font-size: 22px; fill: #8db8ea; stroke: #2a5ea8; stroke-width: 1px; }
.ic-small { font-size: 15px; fill: #8db8ea; stroke: #2a5ea8; stroke-width: 1px; }
.ic-abc { font: 700 11px "DejaVu Sans", sans-serif; fill: #3a3d3b; }
.ic-num { font: 22px "Open Sans", sans-serif; fill: #555; }
.ic-day { font: 700 10px "Open Sans", sans-serif; fill: #555; }
.ic-dec { font: 10px "Open Sans", sans-serif; fill: #111; }
.ic-tee { font: 700 24px "Liberation Serif", serif; fill: #3c4042; }
.ic-hash { font: 14px "DejaVu Sans", sans-serif; fill: #2a5ea8; }
.ic-list { font: 700 11px "DejaVu Serif", serif; fill: #2a5ea8; }
.ic-fx { font: italic 700 17px "Liberation Serif", serif; fill: #b5b5b5; }
.ic-func { font: italic 700 21px "Liberation Serif", serif; fill: #7b4a92; }

/* main areas */
.body { display: flex; flex: 1; min-height: 0; background: #f0f0f0; border-bottom: 1px solid #999; }
.work, .doc { display: flex; flex-direction: column; flex: 1; min-width: 0; }
.splitter { display: flex; align-items: center; flex: none; width: 8px; border: solid #999; border-width: 0 1px; background: #f0f0f0; }
.splitter i { width: 6px; height: 70px; background: #696969; }
.splitter i::before { content: ""; display: block; margin: 31px 0 0 1px; width: 0; border: 4px solid transparent; border-left-color: #fff; border-right: 0; }
.side { display: flex; flex-direction: column; align-items: center; flex: none; width: 39px; gap: 4px; background: linear-gradient(90deg, #f0f0f0 80%, #e2e2e2); }
.side button { display: flex; align-items: center; justify-content: center; width: 32px; height: 31px; }
.side svg { width: 24px; height: 24px; }
.side .top { height: 40px; border-bottom: 1px solid #ddd; width: 22px; }
.side .on { border: 1px solid #aaa; border-radius: 3px; }

/* formula bar */
.formula { display: flex; align-items: center; flex: none; height: 28px; padding-bottom: 2px; border-bottom: 1px solid #999; }
.name { width: 121px; border: 3px solid #aecbeb; border-left: 0; outline: 1px solid #999; outline-offset: -1px; background-color: #fff; opacity: .8; }
.fb { width: 25px; }
.fb svg { width: 24px; height: 24px; }
.finput { flex: 1; min-width: 0; height: 24px; padding: 0 3px; border: 3px solid #aecbeb; outline: 1px solid #a0a0a8; outline-offset: -1px; font: inherit; }
.formula .sep { background-position: 4px 0; }
.fdrop { width: 18px; height: 22px; margin: 0 6px 0 4px; background: #cdcdcd; }
.fdrop::before { content: ""; display: block; margin: 0 auto; width: 0; border: 6px solid transparent; border-top-color: #888; border-bottom: 0; }

/* spreadsheet */
.sheet { display: flex; flex: 1; min-height: 0; }
.cells { flex: 1; min-width: 0; overflow: hidden; background: #fff; }
table { width: 100%; table-layout: fixed; border-spacing: 0; border-collapse: separate; }
.c-num { width: 28px; }
.c-a { width: 184px; }
.c-b { width: 312px; }
td { height: 17px; padding: 0 0 0 1px; border: solid #c0c0c0; border-width: 0 1px 1px 0; vertical-align: bottom; white-space: nowrap; overflow: hidden; font: 13px/15px "Liberation Sans", Arial, sans-serif; }
td:last-child { border-right: 0; }
th { height: 17px; padding: 0; font-weight: 400; background: linear-gradient(90deg, #f7f7f7 40%, #efefef 40%); border: solid #6b6b6b; border-width: 0 1px 1px 0; line-height: 16px; }
thead th { height: 19px; background: linear-gradient(#f7f7f7 45%, #efefef 45%); }
thead th:nth-child(2) { border-right-color: #0060b0; }
thead th:last-child { padding-left: 143px; border-right: 0; }
tbody th { padding-right: 6px; }
thead .sel { background: linear-gradient(#61aae6 45%, #0078d7 45%); color: #fff; font-weight: 700; }
tbody .sel { background: linear-gradient(90deg, #61aae6 40%, #0078d7 40%); color: #fff; font-weight: 700; }
.h31 > * { height: 31px; }
.h46 > * { height: 46px; }
.h76 > * { height: 76px; }
.h91 > * { height: 91px; }
.olive td { background: #9f9f45; border-color: #9f9f45; }
.merged { text-align: center; vertical-align: middle; }
td.cursor { position: relative; overflow: visible; }
.cursor::before { content: ""; position: absolute; inset: -2px -1px -1px -1px; border: 2px solid #000; }
.cursor::after { content: ""; position: absolute; right: -3px; bottom: -3px; width: 5px; height: 5px; background: #000; }
s { text-decoration: none; background: url("data:image/svg+xml,%3Csvg xmlns='http://www.w3.org/2000/svg' width='4' height='3'%3E%3Cpath d='M-1 1.500L0 2.500 2 .5 4 2.500 5 1.500' fill='none' stroke='%23f00'/%3E%3C/svg%3E") 0 100% repeat-x; }

/* scroll bars */
.vscroll { display: flex; flex-direction: column; align-items: center; flex: none; width: 16px; background: #f0f0f0; }
.cells + .vscroll { margin-left: 1px; }
.vscroll svg, .hscroll svg { width: 12px; height: 12px; }
.split { width: 16px; height: 5px; margin-bottom: 4px; border-bottom: 2px solid #999; border-top: 2px solid #999; background: #000; }
.thumb-v { width: 100%; background: #cdcdcd; }
.calc .gap-a { flex: 180; }
.calc .thumb-v { flex: 292; }
.calc .gap-b { flex: 319; }
.writer .vscroll { padding: 3px 0 2px; border-left: 1px solid #fff; width: 17px; }
.writer .gap-a { flex: 564; }
.writer .thumb-v { flex: 216; }
.writer .gap-b { flex: 87; }
.hscroll { display: flex; align-items: center; flex: none; height: 16px; margin-top: 1px; padding-right: 18px; }
.hscroll svg:first-child { margin-left: -3px; }
.thumb-h { width: 160px; height: 15px; margin-left: 2px; background: #cdcdcd; }
.end { margin-left: auto; }
.split-h { width: 5px; height: 16px; margin-left: 3px; border: solid #999; border-width: 0 2px; background: #000; }
.tabs { display: flex; align-items: center; flex: none; height: 18px; padding-left: 2px; }
.tabs button { display: flex; justify-content: center; width: 17px; }
.tabs svg { width: 10px; height: 10px; }
.tabs .add { width: 28px; }
.tabs .tab { align-items: flex-end; width: 60px; height: 18px; border: solid #555; border-width: 0 1px 1px; background: #fff; font-weight: 700; }

/* status bar */
.status { display: flex; align-items: stretch; flex: none; height: 25px; background: #f0f0f0; line-height: 16px; white-space: nowrap; overflow: hidden; }
.status span { display: flex; align-items: center; flex: none; margin: 4px 0; padding-left: 9px; border-right: 1px solid #aaa; }
.status span:last-child { border: 0; flex: 1; }
.status svg { width: 16px; height: 16px; }
.status .c { justify-content: center; padding: 0; }
.status span:nth-child(1) { width: 108px; padding-left: 6px; }
.status span:nth-child(2) { width: 110px; }
.status span:nth-child(3) { width: 102px; }
.status span:nth-child(4) { width: 97px; }
.status span:nth-child(5) { width: 69px; }
.status span:nth-child(6), .status span:nth-child(7) { width: 30px; }
.status span:nth-child(8) { width: 31px; }
.status span:nth-child(9) { width: 210px; }
.status .zoom { width: 144px; padding: 0 6px 0 10px; gap: 5px; }
.writer-status span:nth-child(1) { width: 126px; padding-left: 11px; }
.writer-status span:nth-child(2) { width: 235px; }
.writer-status span:nth-child(3) { width: 86px; }
.writer-status span:nth-child(4) { width: 69px; }
.writer-status span:nth-child(5) { width: 30px; }
.writer-status span:nth-child(7) { width: 30px; }
.writer-status span:nth-child(8) { width: 49px; }
.status.writer-status .pages { width: 77px; padding: 0 0 0 11px; gap: 5px; }
.pages .p1 { width: 10px; height: 14px; }
.pages .p2 { width: 20px; height: 14px; }
.pages .p3 { width: 18px; height: 14px; }
.minus { flex: none; width: 9px; height: 9px; background: linear-gradient(#888, #888) 0 4px / 9px 2px no-repeat; }
.plus { background: linear-gradient(#888, #888) 0 4px / 9px 2px no-repeat, linear-gradient(#888, #888) 4px 0 / 2px 9px no-repeat; }
.zoom input { appearance: none; flex: 1; min-width: 0; height: 10px; margin: 0; background: linear-gradient(#666, #666) 0 4px / 100% 2px no-repeat; }
.zoom input::-webkit-slider-thumb { appearance: none; width: 9px; height: 9px; border: 1px solid #888; border-radius: 50%; background: #fff; }

/* document */
.doc { background: #dfdfdd; }
.ruler { display: flex; align-items: flex-start; flex: none; height: 25px; padding-right: 34px; }
.tabkind { flex: none; width: 6px; height: 5px; margin: 10px 18px 0 8px; border: solid #444; border-width: 0 0 2px 2px; }
.scale { flex: 1; min-width: 0; }
.nums { font: 10px "Open Sans", sans-serif; fill: #555; text-anchor: middle; }
.canvas { display: flex; flex-direction: column; flex: 1; min-height: 0; gap: 17px; padding: 0 34px 0 32px; overflow: hidden; }
.page { flex: 1; min-height: 0; padding-top: 63px; background: #fff; box-shadow: 0 0 5px rgba(0, 0, 0, .45); }
.tail { flex: none; height: 41px; padding: 0; }
.crops { display: flex; justify-content: space-between; padding: 0 43px 0 101px; }
.crops i { width: 14px; height: 14px; border: solid #c0c0c0; border-width: 0 1px 1px 0; }
.crops .r { border-width: 0 0 1px 1px; }
.text { padding: 0 40px 0 115px; font: 13px/19px Lato, Carlito, sans-serif; white-space: nowrap; }
.text p { margin: 0 0 11px; }
```
